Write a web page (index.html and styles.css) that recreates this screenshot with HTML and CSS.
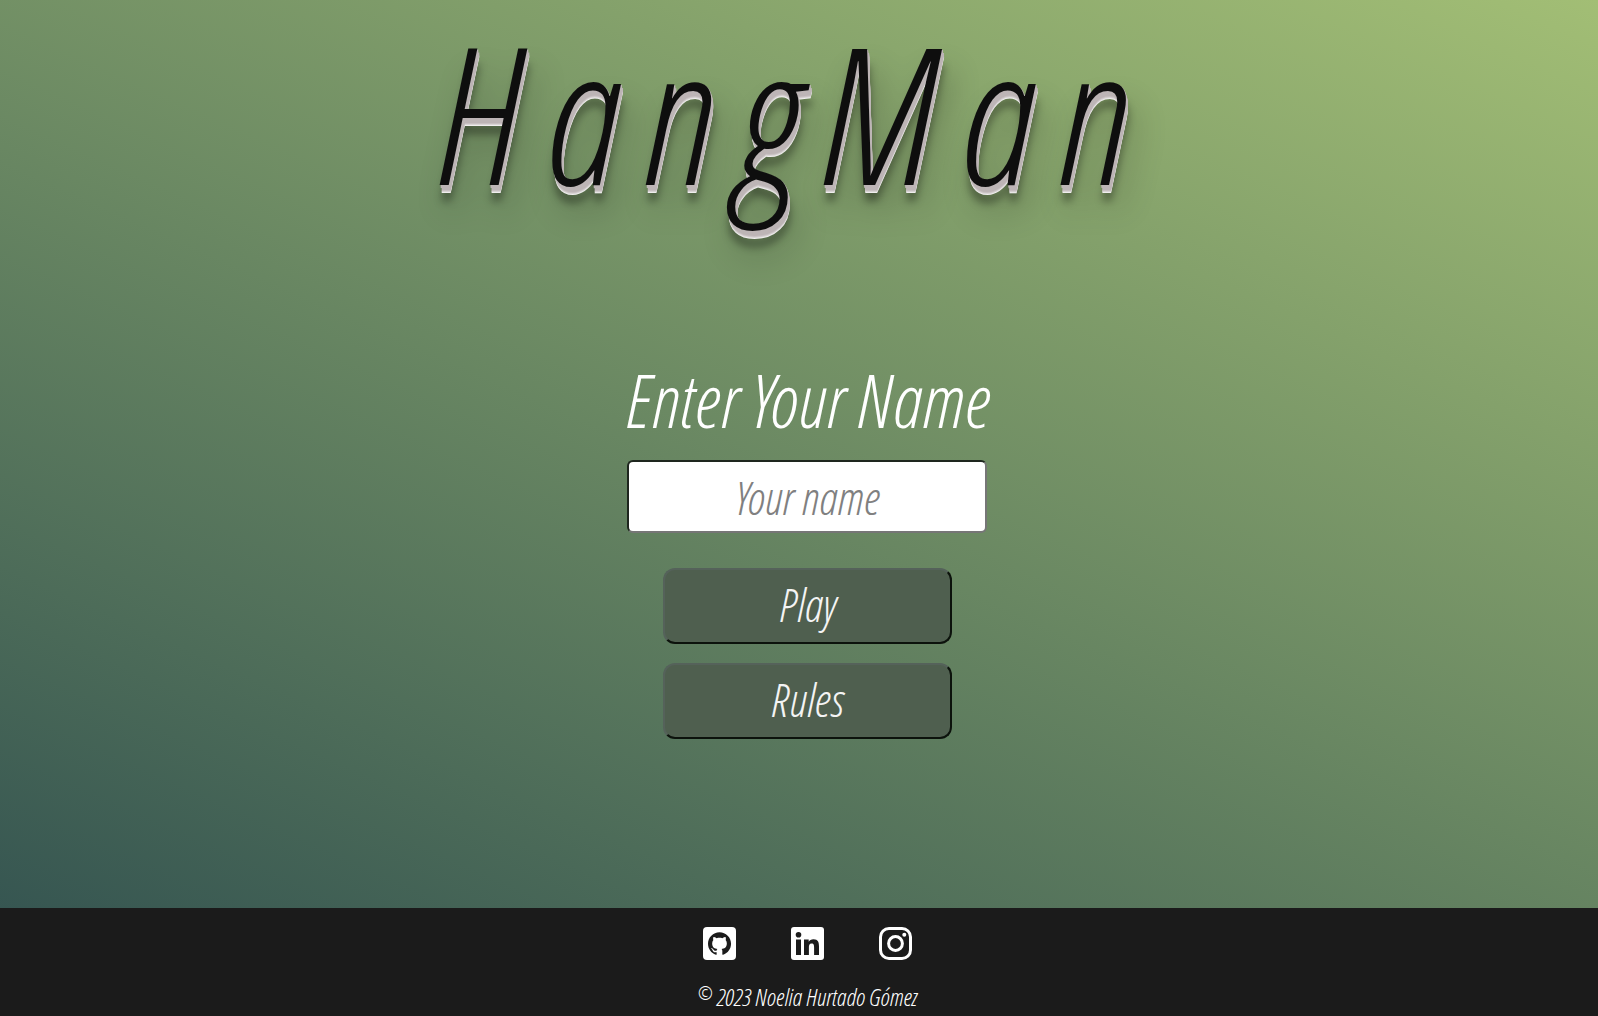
FILE: index.html
```html
<!DOCTYPE html>
<html lang="en">
<head>
<meta charset="utf-8">
<title>HangMan</title>
<link rel="stylesheet" href="styles.css">
</head>
<body>
<header class="header"><h1 class="title">HangMan</h1></header>
<main class="main">
  <form class="form">
    <label class="label" for="player">Enter Your Name</label>
    <input class="input" id="player" type="text" placeholder="Your name">
    <button class="button" type="submit">Play</button>
    <button class="button" type="button">Rules</button>
  </form>
</main>
<footer class="footer">
  <nav class="social">
    <a class="link" href="#github" aria-label="GitHub">
      <svg class="icon" viewBox="0 0 33 33"><rect width="33" height="33" rx="4" fill="#fff"/><path transform="translate(5 5) scale(.96)" fill="#1b1b1b" d="M12 .297c-6.63 0-12 5.373-12 12 0 5.303 3.438 9.8 8.205 11.385.6.113.82-.258.82-.577 0-.285-.01-1.04-.015-2.04-3.338.724-4.042-1.61-4.042-1.61C4.422 18.07 3.633 17.7 3.633 17.7c-1.087-.744.084-.729.084-.729 1.205.084 1.838 1.236 1.838 1.236 1.07 1.835 2.809 1.305 3.495.998.108-.776.417-1.305.76-1.605-2.665-.3-5.466-1.332-5.466-5.93 0-1.31.465-2.38 1.235-3.22-.135-.303-.54-1.523.105-3.176 0 0 1.005-.322 3.3 1.23.96-.267 1.98-.399 3-.405 1.02.006 2.04.138 3 .405 2.28-1.552 3.285-1.23 3.285-1.23.645 1.653.24 2.873.12 3.176.765.84 1.23 1.91 1.23 3.22 0 4.61-2.805 5.625-5.475 5.92.42.36.81 1.096.81 2.22 0 1.606-.015 2.896-.015 3.286 0 .315.21.69.825.57C20.565 22.092 24 17.592 24 12.297c0-6.627-5.373-12-12-12"/></svg>
    </a>
    <a class="link" href="#linkedin" aria-label="LinkedIn">
      <svg class="icon" viewBox="0 0 33 33"><rect width="33" height="33" rx="3" fill="#fff"/><g fill="#1b1b1b"><circle cx="7.5" cy="7.8" r="2.8"/><path d="M5 12.6h5V28H5zM13 12.6h4.700v2.100c.8-1.400 2.500-2.500 4.800-2.500 4.600 0 5.500 3 5.500 7.300V28h-4.900v-7.500c0-1.900-.1-4.100-2.500-4.100s-2.700 1.900-2.700 4V28H13z"/></g></svg>
    </a>
    <a class="link" href="#instagram" aria-label="Instagram">
      <svg class="icon" viewBox="0 0 33 33" fill="none" stroke="#fff" stroke-width="3"><rect x="1.500" y="1.500" width="30" height="30" rx="8.500"/><circle cx="16.500" cy="16.500" r="6.900"/><circle cx="25.300" cy="7.700" r="2" fill="#fff" stroke="none"/></svg>
    </a>
  </nav>
  <p class="copyright"><span class="mark">©</span> 2023 Noelia Hurtado Gómez</p>
</footer>
</body>
</html>
```
FILE: styles.css
```css
* { box-sizing: border-box; }

body {
  margin: 0;
  min-height: 100vh;
  display: flex;
  flex-direction: column;
  background: linear-gradient(24deg, #2f4f4f, #a2be75);
  font-family: "Open Sans Condensed Light", "Open Sans Condensed", sans-serif;
  font-style: italic;
  font-weight: 300;
  color: #fff;
}

.header {
  padding-right: 16px;
  text-align: center;
}

.title {
  margin: 0;
  font-size: 190px;
  font-weight: 300;
  line-height: 224px;
  letter-spacing: 22px;
  color: #0e0e0e;
  text-shadow:
    1px 1px #bdb5b6, 1px 2px #bdb5b6, 1px 3px #bdb5b6,
    2px 4px #bdb5b6, 2px 5px #bdb5b6, 2px 6px #c8c0c2,
    2px 7px #d8d4d4, 2px 8px #f0eeee,
    2px 16px 8px rgba(0, 0, 0, .4),
    8px 24px 32px rgba(0, 0, 0, .3);
}

.main {
  flex: 1;
  padding: 136px 0 0 16px;
}

.form {
  display: flex;
  flex-direction: column;
  align-items: center;
}

.label {
  margin-bottom: 20px;
  font-size: 74px;
  line-height: 80px;
}

.input {
  width: 360px;
  height: 73px;
  margin-bottom: 35px;
  padding: 0;
  border: 2px solid;
  border-color: #1e261e #767676 #767676 #1e261e;
  border-radius: 6px;
  background: #fff;
  color: #222;
  font: inherit;
  font-size: 46px;
  text-align: center;
}

.input::placeholder { color: #808080; }

.button {
  width: 289px;
  height: 76px;
  margin-bottom: 19px;
  padding: 0 0 4px;
  border: 2px solid;
  border-color: #55625a #0c120c #0c120c #55625a;
  border-radius: 12px;
  background: #4f5f4f;
  color: #f4f4f4;
  font: inherit;
  font-size: 46px;
}

.footer {
  padding: 19px 0 3px 16px;
  background: #1b1b1b;
  text-align: center;
}

.social {
  display: flex;
  justify-content: center;
  gap: 55px;
}

.link, .icon {
  display: block;
  width: 33px;
  height: 33px;
}

.copyright {
  margin: 21px 0 0;
  font-size: 24px;
  line-height: 32px;
}

.mark {
  font-size: 18px;
  vertical-align: 6px;
  line-height: 16px;
}
```
